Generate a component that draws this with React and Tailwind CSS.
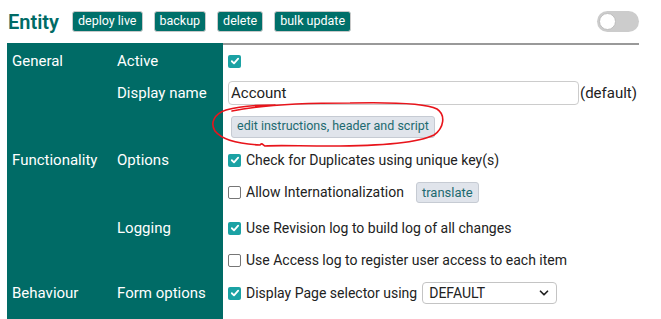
import { ChevronDown } from 'lucide-react'

const font = { fontFamily: 'Roboto, "Liberation Sans", sans-serif' }

const Box = ({ checked }) =>
  checked ? (
    <span className="inline-flex h-[13px] w-[13px] shrink-0 items-center justify-center rounded-[2px] bg-[#1ba2a4]">
      <svg viewBox="0 0 12 12" className="h-[10px] w-[10px]">
        <path d="M2.2 6.3 4.8 8.8 9.8 3.2" fill="none" stroke="white" strokeWidth="2.2" strokeLinecap="round" strokeLinejoin="round" />
      </svg>
    </span>
  ) : (
    <span className="inline-block h-[13px] w-[13px] shrink-0 rounded-[2px] border border-[#767676] bg-white"></span>
  )

const Check = ({ checked, children }) => (
  <div className="flex h-[32px] items-center gap-[5px]">
    <Box checked={checked} />
    {children}
  </div>
)

const Label = ({ children }) => <div className="flex h-[32px] items-center">{children}</div>

const Row = ({ group, label, children, className = '' }) => (
  <div className="grid grid-cols-[110px_106px_1fr]">
    <div className="bg-[#006b66] pl-[5px] text-[15px] text-white">{group && <Label>{group}</Label>}</div>
    <div className="bg-[#006b66] text-[15px] text-white">{label && <Label>{label}</Label>}</div>
    <div className={`pl-[5px] ${className}`}>{children}</div>
  </div>
)

const GrayButton = ({ children, className = '' }) => (
  <button className={`rounded-[3px] border border-[#c6cbd3] bg-[#e0e4eb] px-[5px] leading-none text-[#1d6a70] ${className}`}>
    {children}
  </button>
)

export default function App() {
  return (
    <div className="relative h-[319px] w-[661px] overflow-hidden bg-white text-[14px] text-[#222]" style={font}>
      {/* header */}
      <div className="mx-[7px] flex h-[43px] w-[632px] items-center pl-[1px]">
        <h1 className="text-[20px] font-semibold text-[#006b66]">Entity</h1>
        <div className="ml-[13px] flex gap-[11px]">
          {['deploy live', 'backup', 'delete', 'bulk update'].map((b) => (
            <button key={b} className="h-[21px] rounded-[3px] border border-[#c9c9c9] bg-[#00706a] px-[5px] text-[12.5px] leading-none text-white">
              {b}
            </button>
          ))}
        </div>
        <div className="ml-auto flex h-[21px] w-[42px] items-center rounded-full bg-[#cccccc] pl-[2px]">
          <span className="h-[17px] w-[17px] rounded-full border border-[#bdbdbd] bg-white"></span>
        </div>
      </div>
      <div className="mx-[7px] flex w-[632px]">
        <div className="h-[2px] w-[216px] bg-[#006b66]"></div>
        <div className="h-[2px] flex-1 bg-[#999]"></div>
      </div>

      <div className="mx-[7px] w-[632px]">
        <Row group="General" label="Active">
          <Check checked />
        </Row>
        <Row label="Display name">
          <div className="flex h-[32px] items-center">
            <input
              readOnly
              value="Account"
              className="h-[24px] w-[351px] rounded-[4px] border border-[#cccccc] px-[2px] text-[15px] text-[#222] outline-none"
              style={font}
            />
            <span className="ml-[1px] text-[15px]">(default)</span>
          </div>
          <div className="flex h-[35px] items-center pl-[3px]">
            <GrayButton className="h-[22px] text-[12.5px]">edit instructions, header and script</GrayButton>
          </div>
        </Row>
        <Row group="Functionality" label="Options" className="pb-[4px]">
          <Check checked>Check for Duplicates using unique key(s)</Check>
          <Check>
            Allow Internationalization
            <GrayButton className="ml-[7px] h-[21px] text-[13px]">translate</GrayButton>
          </Check>
        </Row>
        <Row label="Logging" className="pb-[1px]">
          <Check checked>Use Revision log to build log of all changes</Check>
          <Check>Use Access log to register user access to each item</Check>
        </Row>
        <Row group="Behaviour" label="Form options" className="pb-[20px]">
          <Check checked>
            Display Page selector using
            <div className="flex h-[22px] w-[135px] items-center justify-between rounded-[4px] border border-[#c4c4c4] bg-white pl-[6px] pr-[5px] text-[14px]">
              DEFAULT
              <ChevronDown size={14} strokeWidth={3} />
            </div>
          </Check>
        </Row>
      </div>

      {/* hand-drawn annotation */}
      <svg className="pointer-events-none absolute left-0 top-0" width="661" height="319">
        <path
          d="M232 111 C260 105 300 103 350 103 C395 102 425 103 437 109 C446 115 444 128 434 135 C418 143 380 146 330 146 C300 146 275 145 265 146 C262 144 262 143 260 145 C240 144 222 140 215 131 C210 123 214 114 226 110 C240 106 258 105 275 105"
          fill="none"
          stroke="#e8141b"
          strokeWidth="1.6"
          strokeLinecap="round"
        />
      </svg>
    </div>
  )
}
